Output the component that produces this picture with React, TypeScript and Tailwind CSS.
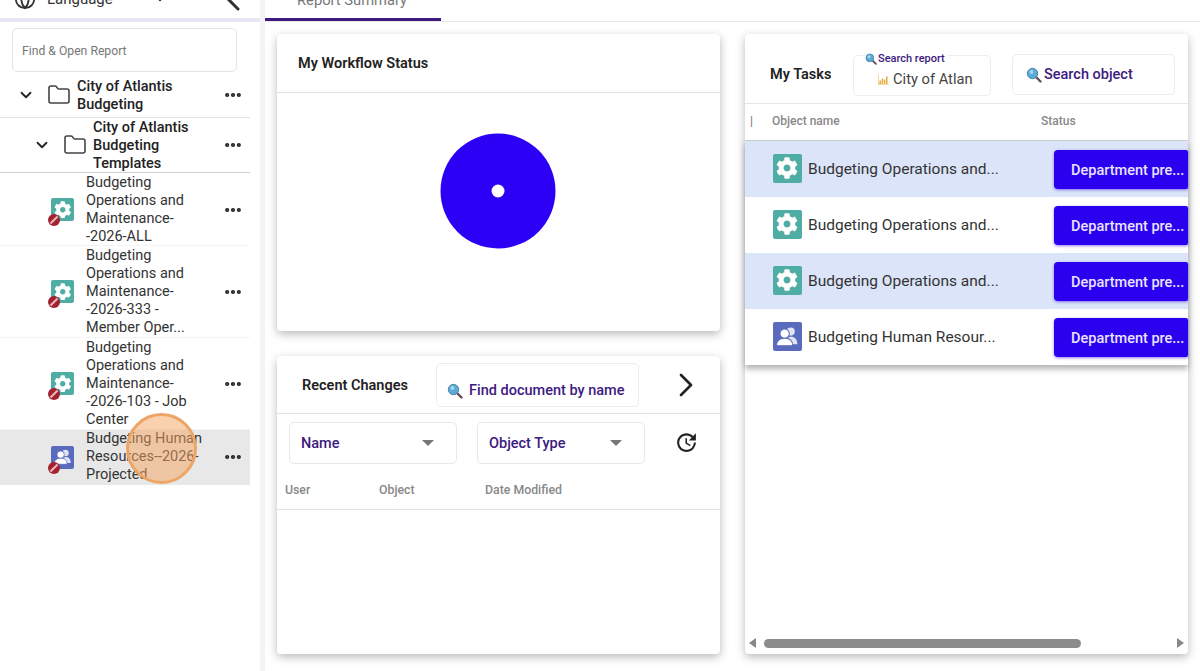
import { ChevronDown, ChevronLeft, ChevronRight, Folder, Globe, MoreHorizontal } from 'lucide-react';
import { FaCog } from 'react-icons/fa';
import { MdUpdate } from 'react-icons/md';

const treeItems = [
  { kind: 'ops', height: 'h-[73px] pt-[1px]', lines: ['Budgeting', 'Operations and', 'Maintenance-', '-2026-ALL'] },
  { kind: 'ops', height: 'h-[92px]', lines: ['Budgeting', 'Operations and', 'Maintenance-', '-2026-333 -', 'Member Oper...'] },
  { kind: 'ops', height: 'h-[92px]', lines: ['Budgeting', 'Operations and', 'Maintenance-', '-2026-103 - Job', 'Center'] },
  { kind: 'hr', height: 'h-[55px] pb-[1px]', lines: ['Budgeting Human', 'Resources--2026-', 'Projected'], active: true },
];

const tasks = [
  { kind: 'ops', name: 'Budgeting Operations and...', shaded: true },
  { kind: 'ops', name: 'Budgeting Operations and...', shaded: false },
  { kind: 'ops', name: 'Budgeting Operations and...', shaded: true },
  { kind: 'hr', name: 'Budgeting Human Resour...', shaded: false },
];

function Magnifier({ size = 16 }: { size?: number }) {
  return (
    <svg width={size} height={size} viewBox="0 0 16 16" className="shrink-0">
      <path d="M10 10l4.5 4.5" stroke="#6b4a5e" strokeWidth="2.4" strokeLinecap="round" />
      <circle cx="6.5" cy="6.5" r="5.2" fill="#5aa9d6" stroke="#4a86a8" strokeWidth="1" />
      <circle cx="5.4" cy="5" r="2" fill="#a5d6ee" />
    </svg>
  );
}

function PeopleGlyph({ size }: { size: number }) {
  return (
    <svg width={size} height={size} viewBox="0 0 24 24">
      <circle cx="15.5" cy="7.5" r="4" fill="#dfe3f5" />
      <path d="M11 20c0-5 2-7.5 5-7.5s6 2 6 7.5z" fill="#dfe3f5" />
      <circle cx="9.5" cy="9.5" r="4.6" fill="#fff" stroke="#5a6bbd" strokeWidth="1" />
      <path d="M1.5 21.5c0-5.5 3.2-7.5 8-7.5s8 2 8 7.5z" fill="#fff" stroke="#5a6bbd" strokeWidth="1" />
    </svg>
  );
}

function ObjectIcon({ kind, size }: { kind: string; size: number }) {
  const isOps = kind === 'ops';
  return (
    <div
      className={`flex shrink-0 items-center justify-center rounded-[2px] text-white ${isOps ? 'bg-[#4fada3]' : 'bg-[#5a6bbd]'}`}
      style={{ width: size, height: size }}
    >
      {isOps ? <FaCog size={size * 0.76} /> : <PeopleGlyph size={size * 0.84} />}
    </div>
  );
}

function TreeIcon({ kind }: { kind: string }) {
  return (
    <div className="relative ml-[3px] mr-[12px] shrink-0">
      <ObjectIcon kind={kind} size={23} />
      <div className="absolute -bottom-[5px] -left-[3px] flex h-[12px] w-[12px] items-center justify-center rounded-full bg-[#a3222f]">
        <div className="h-[2px] w-[10px] -rotate-45 bg-[#e8b9bd]" />
      </div>
    </div>
  );
}

function Sidebar() {
  return (
    <aside className="flex w-[265px] shrink-0 flex-col border-r-[5px] border-[#f3f3f5] bg-white">
      <div className="h-[18px] overflow-hidden">
        <div className="-mt-[16px] flex h-[30px] w-full items-center text-[#333]">
          <Globe size={22} className="ml-[14px] shrink-0" />
          <span className="ml-[11px] text-[15px]">Language</span>
          <ChevronDown size={14} className="ml-[40px] shrink-0" />
          <ChevronLeft size={40} strokeWidth={1.8} className="ml-[46px] shrink-0" />
        </div>
      </div>
      <div className="h-[4px] bg-[#e6e6f5]" />
      <div className="mx-[12px] mt-[6px] flex h-[44px] w-[225px] items-center rounded-[5px] border border-[#e4e4e4] px-[9px] pt-[2px] text-[12.2px] text-[#777]">
        Find &amp; Open Report
      </div>
      <div className="w-[250px] text-[14.5px] leading-[18px]">
        <div className="flex h-[46px] items-center border-b border-[#e2e2e2] pt-[1px] font-medium text-[#222]">
          <ChevronDown size={18} strokeWidth={2.4} className="ml-[17px] shrink-0" />
          <Folder size={24} strokeWidth={1.6} className="ml-[12px] shrink-0 text-[#444]" />
          <span className="ml-[6px] mt-[2px] w-[125px]">City of Atlantis Budgeting</span>
          <MoreHorizontal size={20} strokeWidth={3} className="ml-auto mr-[7px] shrink-0" />
        </div>
        <div className="flex h-[55px] items-center border-b border-[#cfcfcf] font-medium text-[#222]">
          <ChevronDown size={18} strokeWidth={2.4} className="ml-[33px] shrink-0" />
          <Folder size={24} strokeWidth={1.6} className="ml-[12px] shrink-0 text-[#444]" />
          <span className="ml-[6px] mt-[2px] w-[110px]">City of Atlantis Budgeting Templates</span>
          <MoreHorizontal size={20} strokeWidth={3} className="ml-auto mr-[7px] shrink-0" />
        </div>
        {treeItems.map((item, i) => (
          <div
            key={i}
            className={`flex items-center pl-[48px] text-[#333] ${item.height} ${item.active ? 'bg-[#e8e8e8]' : 'border-b border-[#f4f4f4]'}`}
          >
            <TreeIcon kind={item.kind} />
            <div>
              {item.lines.map((line) => (
                <div key={line} className="whitespace-nowrap">{line}</div>
              ))}
            </div>
            <MoreHorizontal size={20} strokeWidth={3} className="ml-auto mr-[7px] shrink-0 text-[#222]" />
          </div>
        ))}
      </div>
    </aside>
  );
}

function Card({ className, children }: { className: string; children: React.ReactNode }) {
  return (
    <section className={`flex flex-col rounded-[4px] bg-white shadow-[0_3px_10px_rgba(0,0,0,0.28)] ${className}`}>
      {children}
    </section>
  );
}

function WorkflowCard() {
  return (
    <Card className="h-[297px]">
      <div className="flex h-[59px] shrink-0 items-center border-b border-[#e0e0e0] pl-[21px] pt-[2px] text-[14.5px] font-semibold text-[#222]">
        My Workflow Status
      </div>
      <div className="flex justify-center pr-[2px] pt-[40px]">
        <svg width="116" height="116" viewBox="0 0 116 116">
          <circle cx="58" cy="58" r="57.5" fill="#2b00f5" />
          <circle cx="58" cy="58" r="6.5" fill="#fff" />
        </svg>
      </div>
    </Card>
  );
}

function FilterSelect({ label, className }: { label: string; className: string }) {
  return (
    <div className={`flex h-[42px] w-[168px] items-center rounded-[5px] border border-[#e8e8e8] pl-[11px] text-[14.5px] font-medium text-[#3c1a80] ${className}`}>
      <span className="pt-[3px]">{label}</span>
      <svg width="12" height="6" viewBox="0 0 12 6" className="ml-auto mr-[22px]">
        <path d="M0 0h12L6 6z" fill="#777" />
      </svg>
    </div>
  );
}

function RecentCard() {
  return (
    <Card className="h-[298px]">
      <div className="flex h-[58px] shrink-0 items-center border-b border-[#e0e0e0]">
        <span className="ml-[25px] w-[134px] pt-[3px] text-[14.5px] font-semibold text-[#222]">Recent Changes</span>
        <div className="flex h-[44px] w-[203px] items-center gap-[6px] rounded-[5px] border border-[#ececec] pl-[10px] pt-[13px] text-[14.5px] font-medium text-[#3c1a80]">
          <Magnifier />
          Find document by name
        </div>
        <ChevronRight size={40} strokeWidth={1.6} className="ml-[27px] text-[#222]" />
      </div>
      <div className="flex h-[57px] shrink-0 items-center">
        <FilterSelect label="Name" className="ml-[12px]" />
        <FilterSelect label="Object Type" className="ml-[20px]" />
        <MdUpdate size={25} className="ml-[29px] text-[#222]" />
      </div>
      <div className="flex h-[39px] shrink-0 items-center border-b border-[#e0e0e0] text-[12.3px] font-medium text-[#888]">
        <span className="ml-[8px] w-[94px]">User</span>
        <span className="w-[106px]">Object</span>
        <span>Date Modified</span>
      </div>
    </Card>
  );
}

function TasksCard() {
  return (
    <Card className="relative h-[620px]">
      <div className="flex h-[70px] shrink-0 items-center border-b border-[#e6e6e6] pt-[12px]">
        <span className="ml-[25px] w-[83px] text-[14.5px] font-semibold text-[#222]">My Tasks</span>
        <div className="relative mt-[1px] flex h-[41px] w-[138px] items-center rounded-[5px] border border-[#ececec] pl-[24px] pt-[9px] text-[14.7px] text-[#444]">
          <div className="absolute -top-[5px] left-[11px] flex items-center gap-[1px] bg-white pr-[3px] text-[11px] font-medium text-[#3c1a80]">
            <Magnifier size={12} />
            Search report
          </div>
          <svg width="11" height="11" viewBox="0 0 10 10" className="mr-[4px] shrink-0">
            <path d="M0 0v10h10" stroke="#e0b84c" fill="none" />
            <path d="M2 9V6M4 9V4M6 9V5M8 9V2" stroke="#e8a83c" strokeWidth="1.3" />
          </svg>
          City of Atlan
        </div>
        <div className="ml-[21px] flex h-[41px] w-[163px] items-center gap-[2px] rounded-[5px] border border-[#ececec] pl-[13px] text-[14.5px] font-medium text-[#3c1a80]">
          <Magnifier />
          Search object
        </div>
      </div>
      <div className="flex h-[37px] shrink-0 items-center border-b border-[#cfcfcf] pb-[2px] text-[12px] font-medium text-[#888]">
        <span className="ml-[5px] w-[22px] text-[#777]">|</span>
        <span className="w-[269px]">Object name</span>
        <span>Status</span>
      </div>
      <div className="shadow-[0_4px_6px_rgba(0,0,0,0.3)]">
        {tasks.map((task, i) => (
          <div key={i} className={`flex h-[56px] items-center ${task.shaded ? 'bg-[#dbe4f8]' : 'bg-white'}`}>
            <div className="ml-[28px] mb-[1px]">
              <ObjectIcon kind={task.kind} size={29} />
            </div>
            <span className="ml-[6px] w-[246px] whitespace-nowrap pt-[1px] text-[15.5px] text-[#333]">{task.name}</span>
            <div className="flex h-[39px] w-[134px] items-center rounded-l-[4px] rounded-r-[2px] bg-[#2b00ee] pl-[17px] pt-[3px] text-[14.5px] font-medium text-[#e8e4ff] shadow-[0_1px_3px_rgba(43,0,238,0.5)]">
              Department pre...
            </div>
          </div>
        ))}
      </div>
      <div className="absolute inset-x-[3px] bottom-[6px] flex h-[10px] items-center">
        <svg width="10" height="10" viewBox="0 0 10 10" className="shrink-0">
          <path d="M8 0v10L1 5z" fill="#888" />
        </svg>
        <div className="ml-[6px] h-[9px] w-[317px] rounded-full bg-[#8c8c8c]" />
        <svg width="10" height="10" viewBox="0 0 10 10" className="ml-auto shrink-0">
          <path d="M2 0v10l7-5z" fill="#888" />
        </svg>
      </div>
    </Card>
  );
}

export default function App() {
  return (
    <div className="relative flex h-[671px] w-[1200px] overflow-hidden bg-white font-['Roboto',sans-serif]">
      <Sidebar />
      <main className="flex min-w-0 flex-1 flex-col">
        <div className="h-[22px] shrink-0 overflow-hidden border-b border-[#e6e6e6]">
          <div className="-mt-[12px] flex h-[33px] w-[176px] items-center justify-center border-b-[3px] border-[#3c1a80] text-[14.7px] text-[#777]">
            <span className="-mt-[6px] -ml-[2px]">Report Summary</span>
          </div>
        </div>
        <div className="flex gap-[25px] pl-[12px] pt-[12px]">
          <div className="flex w-[443px] shrink-0 flex-col gap-[25px]">
            <WorkflowCard />
            <RecentCard />
          </div>
          <div className="w-[443px] shrink-0">
            <TasksCard />
          </div>
        </div>
      </main>
      {/* click marker from the recording */}
      <div className="absolute left-[126px] top-[413px] h-[71px] w-[71px] rounded-full border-[3px] border-[#eda566] bg-[#f5a460]/50" />
    </div>
  );
}
